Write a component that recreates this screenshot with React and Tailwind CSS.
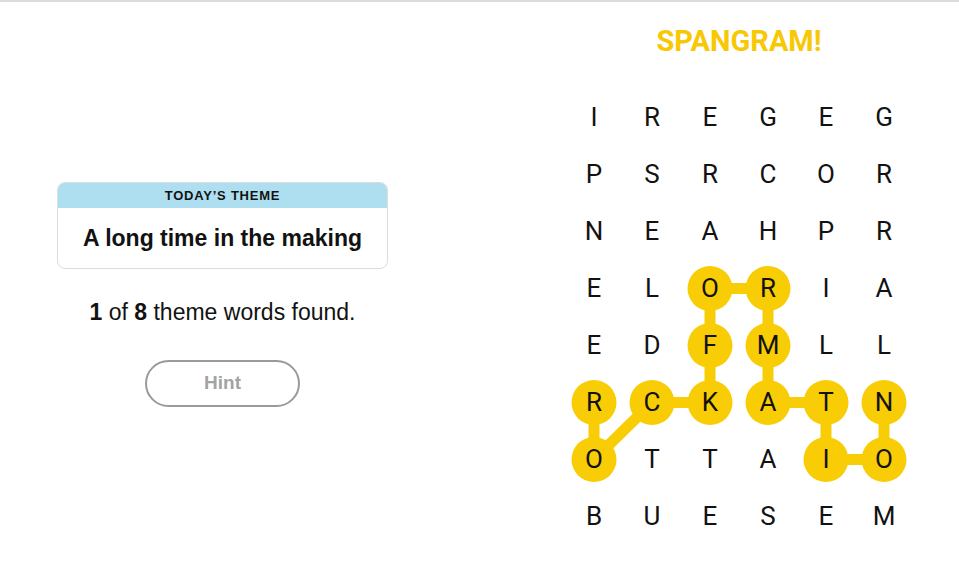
const grid = [
  ["I", "R", "E", "G", "E", "G"],
  ["P", "S", "R", "C", "O", "R"],
  ["N", "E", "A", "H", "P", "R"],
  ["E", "L", "O", "R", "I", "A"],
  ["E", "D", "F", "M", "L", "L"],
  ["R", "C", "K", "A", "T", "N"],
  ["O", "T", "T", "A", "I", "O"],
  ["B", "U", "E", "S", "E", "M"],
];

// ROCKFORMATION path, [row, col]
const path = [
  [5, 0], [6, 0], [5, 1], [5, 2], [4, 2], [3, 2], [3, 3],
  [4, 3], [5, 3], [5, 4], [6, 4], [6, 5], [5, 5],
];

const CW = 58;
const CH = 57;
const cx = (c) => CW / 2 + CW * c;
const cy = (r) => CH / 2 + CH * r;

const roboto = { fontFamily: "Roboto, 'Liberation Sans', sans-serif" };
const arial = { fontFamily: "'Liberation Sans', Arial, sans-serif" };

export default function App() {
  return (
    <div className="w-[959px] h-[574px] bg-white border-t-2 border-[#dcdcdc] flex" style={roboto}>
      {/* left panel */}
      <div className="w-[445px] flex flex-col items-center pt-[180px]" style={arial}>
        <div className="w-[331px] rounded-lg border border-[#dcdcdc] overflow-hidden">
          <div className="h-[25px] bg-[#aedff0] flex items-center justify-center text-[13px] font-bold tracking-[0.06em] text-[#121212]">
            TODAY’S THEME
          </div>
          <div className="h-[60px] flex items-center justify-center text-[23px] font-bold text-[#121212]">
            A long time in the making
          </div>
        </div>
        <p className="mt-[32px] text-[23px] text-[#121212] leading-none">
          <span className="font-bold">1</span> of <span className="font-bold">8</span> theme words found.
        </p>
        <button className="mt-[36px] w-[155px] h-[47px] rounded-full border-2 border-[#9a9a9a] text-[19px] font-bold text-[#a3a3a3]">
          Hint
        </button>
      </div>

      {/* right panel: board */}
      <div className="pl-[120px] pt-[25px] flex flex-col">
        <div className="w-[348px] text-center text-[29px] font-bold text-[#f8c805] leading-none">
          SPANGRAM!
        </div>
        <div className="relative mt-[33px] w-[348px] h-[456px]">
          <svg className="absolute inset-0" width="348" height="456">
            <polyline
              points={path.map(([r, c]) => `${cx(c)},${cy(r)}`).join(" ")}
              fill="none"
              stroke="#f8cd05"
              strokeWidth="11"
              strokeLinejoin="round"
            />
            {path.map(([r, c]) => (
              <circle key={`${r}-${c}`} cx={cx(c)} cy={cy(r)} r="22.5" fill="#f8cd05" />
            ))}
          </svg>
          <div className="relative grid grid-cols-6">
            {grid.map((row, r) =>
              row.map((ch, c) => (
                <div
                  key={`${r}-${c}`}
                  className="h-[57px] flex items-center justify-center text-[26px] text-[#121212]"
                >
                  {ch}
                </div>
              ))
            )}
          </div>
        </div>
      </div>
    </div>
  );
}
